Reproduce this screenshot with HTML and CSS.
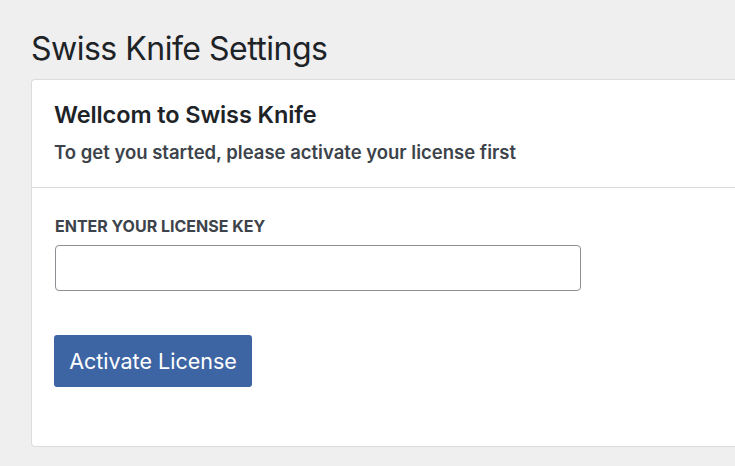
FILE: index.html
```html
<!DOCTYPE html>
<html>
<head>
<meta charset="utf-8">
<link rel="stylesheet" href="styles.css">
</head>
<body>
<div class="wrap">
  <h1 class="page-title">Swiss Knife Settings</h1>
  <div class="card">
    <div class="card-header">
      <h2 class="card-title">Wellcom to Swiss Knife</h2>
      <p class="card-sub">To get you started, please activate your license first</p>
    </div>
    <div class="card-body">
      <label class="field-label" for="key">ENTER YOUR LICENSE KEY</label>
      <input class="field-input" id="key" type="text">
      <button class="btn" type="button">Activate License</button>
    </div>
  </div>
</div>
</body>
</html>
```
FILE: styles.css
```css
html, body {
  margin: 0;
  padding: 0;
  background: #efefef;
  overflow: hidden;
  font-family: Inter, "Noto Sans", sans-serif;
  color: #1d2327;
}
.wrap {
  padding: 29px 0 0 31px;
}
.page-title {
  margin: 0 0 10px 0;
  font-size: 32px;
  font-weight: 400;
  line-height: 40px;
  letter-spacing: -0.5px;
}
.card {
  background: #fff;
  border: 1px solid #dcdcde;
  border-right: none;
  border-radius: 4px 0 0 4px;
}
.card-header {
  padding: 20px 22px 23px 22px;
  border-bottom: 1px solid #dcdcde;
}
.card-title {
  margin: 0;
  font-size: 23.5px;
  font-weight: 600;
  line-height: 30px;
  letter-spacing: -0.1px;
}
.card-sub {
  margin: 10px 0 0 0;
  font-size: 18.5px;
  font-weight: 600;
  line-height: 24px;
  color: #3c434a;
}
.card-body {
  padding: 28px 22px 59px 22px;
  display: flex;
  flex-direction: column;
  align-items: flex-start;
}
.field-label {
  margin-left: 1px;
  font-size: 16px;
  font-weight: 700;
  line-height: 20px;
  color: #3c434a;
}
.field-input {
  margin: 9px 0 0 1px;
  width: 526px;
  height: 46px;
  box-sizing: border-box;
  border: 1px solid #8c8f94;
  border-radius: 4px;
  background: #fff;
  font: inherit;
}
.btn {
  margin-top: 44px;
  width: 198px;
  height: 52px;
  background: #3e65a3;
  color: #fff;
  border: none;
  border-radius: 3px;
  font-family: Inter, "Noto Sans", sans-serif;
  font-size: 21.5px;
  font-weight: 400;
  padding: 0;
}
```
